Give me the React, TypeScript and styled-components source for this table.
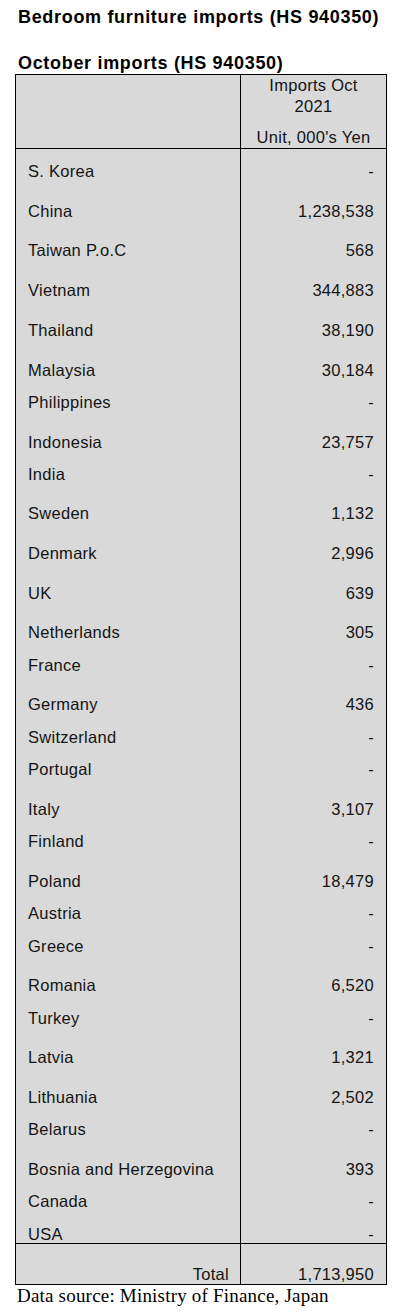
import React from "react";
import styled, { createGlobalStyle } from "styled-components";

const GlobalStyle = createGlobalStyle`
  html, body {
    margin: 0;
    padding: 0;
    background: #ffffff;
  }
  body {
    font-family: "Liberation Sans", Arial, sans-serif;
    color: #111111;
  }
`;

const Page = styled.div`
  width: 405px;
  padding: 6px 0 0 15px;
  box-sizing: border-box;
`;

const Heading = styled.h1<{ $gap?: number }>`
  margin: ${(p) => p.$gap ?? 0}px 0 0 0;
  padding-left: 3px;
  font-family: "Liberation Sans", Arial, sans-serif;
  font-weight: 700;
  font-size: 18px;
  line-height: 22px;
  letter-spacing: 0.68px;
  color: #000000;
`;

const Table = styled.div`
  width: 372px;
  box-sizing: border-box;
  border: 1px solid #000000;
  background: #d9d9d9;
  font-size: 16.5px;
  letter-spacing: 0.28px;
  color: #141414;
`;

const HeaderRow = styled.div`
  display: grid;
  grid-template-columns: 225px 145px;
  height: 74px;
  box-sizing: border-box;
  border-bottom: 1px solid #000000;
`;

const HeaderBlank = styled.div`
  border-right: 1px solid #000000;
`;

const HeaderCell = styled.div`
  display: flex;
  flex-direction: column;
  justify-content: space-between;
  align-items: center;
  text-align: center;
`;

const HeaderTop = styled.div`
  line-height: 21px;
`;

const HeaderUnit = styled.div`
  line-height: 20px;
  padding-bottom: 1px;
`;

const Row = styled.div<{ $h: number }>`
  display: grid;
  grid-template-columns: 225px 145px;
  height: ${(p) => p.$h}px;
  line-height: 20px;
`;

const NameCell = styled.div<{ $pt: number }>`
  border-right: 1px solid #000000;
  padding: ${(p) => p.$pt}px 12px 0 12px;
  white-space: nowrap;
  overflow: hidden;
`;

const ValueCell = styled.div<{ $pt: number }>`
  padding: ${(p) => p.$pt}px 12px 0 12px;
  text-align: right;
  white-space: nowrap;
  overflow: hidden;
`;

const TotalRow = styled.div`
  display: grid;
  grid-template-columns: 225px 145px;
  height: 41px;
  box-sizing: border-box;
  border-top: 1px solid #000000;
  line-height: 20px;
`;

const TotalLabel = styled.div`
  border-right: 1px solid #000000;
  display: flex;
  align-items: flex-end;
  justify-content: flex-end;
  padding-right: 11px;
`;

const TotalValue = styled.div`
  display: flex;
  align-items: flex-end;
  justify-content: flex-end;
  padding-right: 12px;
`;

const Source = styled.p`
  margin: 0;
  padding-left: 2px;
  font-family: "Liberation Serif", "Times New Roman", serif;
  font-size: 19px;
  letter-spacing: 0.2px;
  color: #000000;
`;

type Item = { name: string; value: string; h: number; top?: number };

const rows: Item[] = [
  { name: "S. Korea", value: "-", h: 39 },
  { name: "China", value: "1,238,538", h: 40 },
  { name: "Taiwan P.o.C", value: "568", h: 39 },
  { name: "Vietnam", value: "344,883", h: 40 },
  { name: "Thailand", value: "38,190", h: 40 },
  { name: "Malaysia", value: "30,184", h: 40 },
  { name: "Philippines", value: "-", h: 32 },
  { name: "Indonesia", value: "23,757", h: 40 },
  { name: "India", value: "-", h: 32 },
  { name: "Sweden", value: "1,132", h: 39 },
  { name: "Denmark", value: "2,996", h: 40 },
  { name: "UK", value: "639", h: 40 },
  { name: "Netherlands", value: "305", h: 39 },
  { name: "France", value: "-", h: 33 },
  { name: "Germany", value: "436", h: 39 },
  { name: "Switzerland", value: "-", h: 33 },
  { name: "Portugal", value: "-", h: 32 },
  { name: "Italy", value: "3,107", h: 40 },
  { name: "Finland", value: "-", h: 32 },
  { name: "Poland", value: "18,479", h: 40 },
  { name: "Austria", value: "-", h: 32 },
  { name: "Greece", value: "-", h: 33 },
  { name: "Romania", value: "6,520", h: 39 },
  { name: "Turkey", value: "-", h: 33 },
  { name: "Latvia", value: "1,321", h: 39 },
  { name: "Lithuania", value: "2,502", h: 40 },
  { name: "Belarus", value: "-", h: 32 },
  { name: "Bosnia and Herzegovina", value: "393", h: 40 },
  { name: "Canada", value: "-", h: 32 },
  { name: "USA", value: "-", h: 25, top: 6 },
];

export default function App() {
  return (
    <>
      <GlobalStyle />
      <Page>
        <Heading>Bedroom furniture imports (HS 940350)</Heading>
        <Heading $gap={24}>October imports (HS 940350)</Heading>
        <Table>
          <HeaderRow>
            <HeaderBlank />
            <HeaderCell>
              <HeaderTop>
                Imports Oct
                <br />
                2021
              </HeaderTop>
              <HeaderUnit>Unit, 000's Yen</HeaderUnit>
            </HeaderCell>
          </HeaderRow>
          {rows.map((r) => {
            const pt = r.top ?? r.h - 27;
            return (
              <Row key={r.name} $h={r.h}>
                <NameCell $pt={pt}>{r.name}</NameCell>
                <ValueCell $pt={pt}>{r.value}</ValueCell>
              </Row>
            );
          })}
          <TotalRow>
            <TotalLabel>Total</TotalLabel>
            <TotalValue>1,713,950</TotalValue>
          </TotalRow>
        </Table>
        <Source>Data source: Ministry of Finance, Japan</Source>
      </Page>
    </>
  );
}
